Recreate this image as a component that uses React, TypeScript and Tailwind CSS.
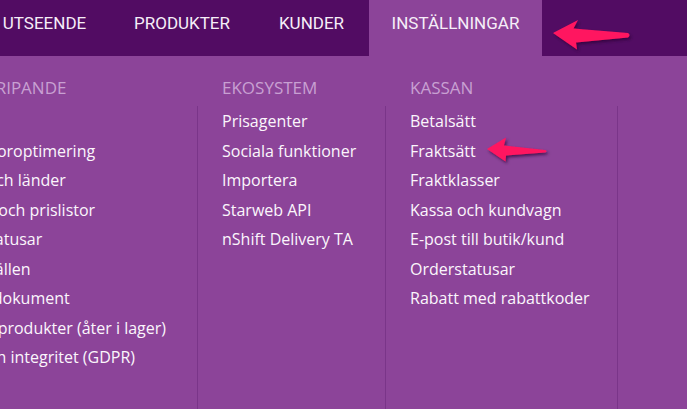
import React from 'react';

// --- Data ---
const tabs = [
    { label: 'UTSEENDE', width: 'w-[131px]', active: false },
    { label: 'PRODUKTER', width: 'w-[144px]', active: false },
    { label: 'KUNDER', width: 'w-[115px]', active: false },
    { label: 'INSTÄLLNINGAR', width: 'w-[173px]', active: true },
];

const columns = [
    {
        title: 'ÖVERGRIPANDE',
        width: 'w-[282px] -ml-[85px]',
        items: [
            'Butik',
            'Sökmotoroptimering',
            'Språk och länder',
            'Valutor och prislistor',
            'Lagerstatusar',
            'Lagerställen',
            'Övriga dokument',
            'Bevaka produkter (åter i lager)',
            'Data och integritet (GDPR)',
        ],
    },
    {
        title: 'EKOSYSTEM',
        width: 'w-[188px]',
        items: ['Prisagenter', 'Sociala funktioner', 'Importera', 'Starweb API', 'nShift Delivery TA'],
    },
    {
        title: 'KASSAN',
        width: 'w-[232px]',
        items: [
            'Betalsätt',
            'Fraktsätt',
            'Fraktklasser',
            'Kassa och kundvagn',
            'E-post till butik/kund',
            'Orderstatusar',
            'Rabatt med rabattkoder',
        ],
    },
    { title: '', width: 'flex-1', items: [] as string[] },
];

// --- Annotation arrows ---
const Arrows = () => (
    <svg className="absolute inset-0 pointer-events-none" width="687" height="409" viewBox="0 0 687 409">
        <defs>
            <filter id="arrowShadow" x="-20%" y="-50%" width="140%" height="200%">
                <feDropShadow dx="1.5" dy="2" stdDeviation="1.6" floodColor="#2a0030" floodOpacity="0.7" />
            </filter>
        </defs>
        <path
            d="M553,33 L578,20 L573.5,28.5 L628,33 Q631,35 628,37.5 L576,42.5 L577,49.5 Z"
            fill="#ff1660"
            filter="url(#arrowShadow)"
        />
        <path
            d="M487,149 L506,137.5 L504,145.5 L545,150 Q548,151 545,152.5 L506,155.5 L505.5,161.5 Z"
            fill="#ff1660"
            filter="url(#arrowShadow)"
        />
    </svg>
);

export default function App() {
    return (
        <div className="relative w-[687px] h-[409px] overflow-hidden bg-[#8c4499] flex flex-col">
            {/* --- Top nav --- */}
            <div className="h-14 bg-[#520c63] flex shrink-0">
                <div className="flex -ml-[21px]">
                    {tabs.map((tab) => (
                        <div
                            key={tab.label}
                            className={`${tab.width} h-14 flex justify-center items-center pb-2 text-[17px] text-[#f6eef8] ${tab.active ? 'bg-[#8c4499]' : ''}`}
                            style={{ fontFamily: 'Roboto, "Liberation Sans", sans-serif' }}
                        >
                            {tab.label}
                        </div>
                    ))}
                </div>
            </div>

            {/* --- Mega menu --- */}
            <div className="flex flex-1 pt-[14px]" style={{ fontFamily: '"Open Sans", "Liberation Sans", sans-serif' }}>
                {columns.map((col, i) => (
                    <div key={i} className={`${col.width} shrink-0 flex flex-col`}>
                        <div className="h-9 leading-9 pl-[25px] text-[17px] text-[#c8a0d2] whitespace-nowrap">{col.title}</div>
                        <ul className="flex-1 border-l border-[#7a3589] pl-[24px] pt-px">
                            {col.items.map((item) => (
                                <li key={item} className="leading-[29.5px] text-[16px] text-[#fbf6fc] whitespace-nowrap">
                                    {item}
                                </li>
                            ))}
                        </ul>
                    </div>
                ))}
            </div>

            <Arrows />
        </div>
    );
}
